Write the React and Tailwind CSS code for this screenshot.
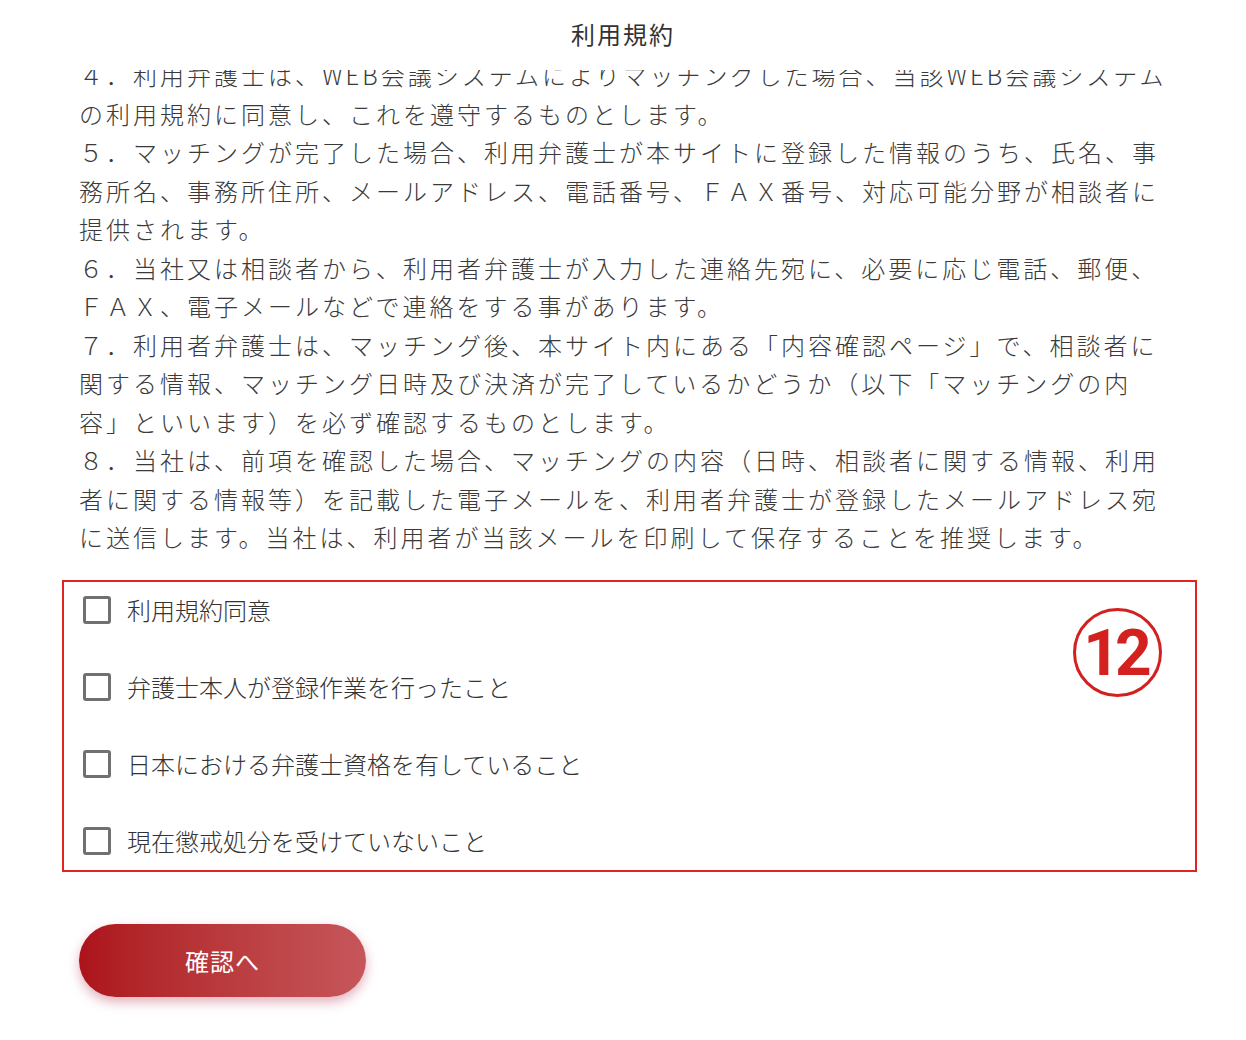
import React from "react";

const paragraphs = [
  "４．利用弁護士は、WEB会議システムによりマッチングした場合、当該WEB会議システムの利用規約に同意し、これを遵守するものとします。",
  "５．マッチングが完了した場合、利用弁護士が本サイトに登録した情報のうち、氏名、事務所名、事務所住所、メールアドレス、電話番号、ＦＡＸ番号、対応可能分野が相談者に提供されます。",
  "６．当社又は相談者から、利用者弁護士が入力した連絡先宛に、必要に応じ電話、郵便、ＦＡＸ、電子メールなどで連絡をする事があります。",
  "７．利用者弁護士は、マッチング後、本サイト内にある「内容確認ページ」で、相談者に関する情報、マッチング日時及び決済が完了しているかどうか（以下「マッチングの内容」といいます）を必ず確認するものとします。",
  "８．当社は、前項を確認した場合、マッチングの内容（日時、相談者に関する情報、利用者に関する情報等）を記載した電子メールを、利用者弁護士が登録したメールアドレス宛に送信します。当社は、利用者が当該メールを印刷して保存することを推奨します。",
];

const checks = [
  "利用規約同意",
  "弁護士本人が登録作業を行ったこと",
  "日本における弁護士資格を有していること",
  "現在懲戒処分を受けていないこと",
];

export default function App() {
  return (
    <div
      className="w-[1246px] h-[1040px] bg-white text-[#333333] overflow-hidden"
      style={{ fontFamily: '"Noto Sans CJK JP", "Noto Sans", sans-serif' }}
    >
      <div className="h-[70px] pt-[15px] text-center text-[24px] leading-[38px] tracking-[2px] font-normal">
        利用規約
      </div>
      <div className="h-[490px] overflow-hidden">
        <div className="mt-[-14px] ml-[79px] w-[1090px] text-[24px] leading-[38.5px] tracking-[3px] font-light text-[#3a3a3a]">
          {paragraphs.map((p, i) => (
            <p key={i}>{p}</p>
          ))}
        </div>
      </div>
      <div className="relative mt-[20px] ml-[62px] w-[1135px] h-[292px] border-2 border-[#e02424] pt-[9px] pl-[19px] flex flex-col gap-[39px]">
        {checks.map((c, i) => (
          <label key={i} className="flex items-center gap-4 h-[38px]">
            <span className="w-[28px] h-[28px] border-[3px] border-[#707070] rounded-[3px] bg-white shrink-0" />
            <span className="text-[24px] leading-[38px] font-light text-[#333333]">{c}</span>
          </label>
        ))}
        <div className="absolute left-[1009px] top-[26px] w-[89px] h-[89px] rounded-full border-[3px] border-[#d3211f] flex items-center justify-center">
          <span
            className="text-[#d3211f] text-[64px] font-bold leading-none tracking-[-5px] pr-[5px] mt-[2px]"
            style={{ fontFamily: "Roboto, sans-serif" }}
          >
            12
          </span>
        </div>
      </div>
      <div className="mt-[52px] ml-[79px]">
        <button className="w-[287px] h-[73px] rounded-full bg-gradient-to-r from-[#ac121b] to-[#c6565b] text-white text-[24px] tracking-[1px] shadow-[0_5px_12px_rgba(170,30,60,0.35)] flex items-center justify-center">
          確認へ
        </button>
      </div>
    </div>
  );
}
